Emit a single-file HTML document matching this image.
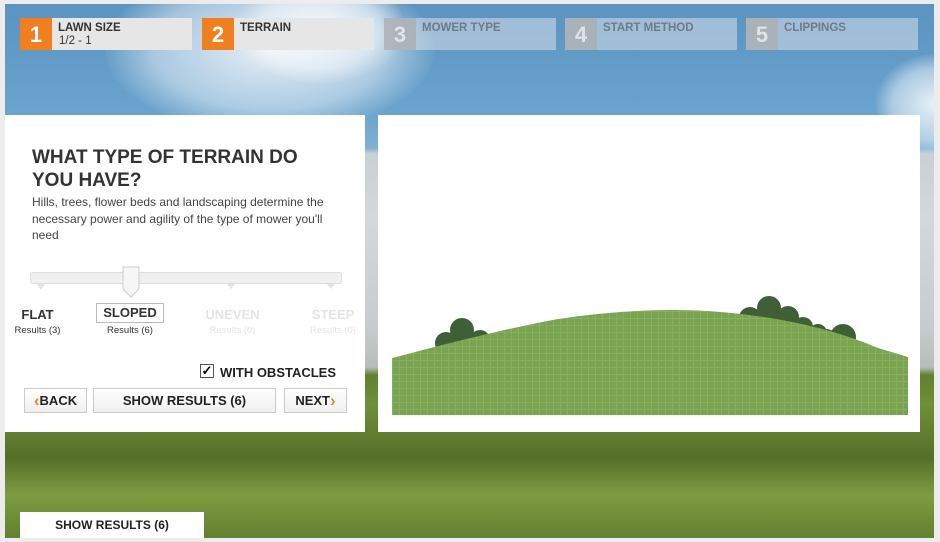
<!DOCTYPE html>
<html><head><style>
*{margin:0;padding:0;box-sizing:border-box}
body{width:940px;height:542px;background:#ececec;font-family:"Liberation Sans",Arial,sans-serif;position:relative;overflow:hidden}
#bg{position:absolute;left:5px;top:4px;width:929px;height:534px;overflow:hidden;
background:linear-gradient(180deg,#5b93c1 0%,#6aa3cd 20%,#7fb1d4 27%,#c9cfd4 28%,#d4d8db 40%,#c8cccf 60%,#b9bdb9 68%,#62802f 69.5%,#6f8f38 75%,#566f28 85%,#7d9c42 92%,#62802f 100%)}
.cloud{position:absolute;border-radius:50%;background:radial-gradient(ellipse at center,rgba(255,255,255,.85),rgba(255,255,255,.45) 50%,rgba(255,255,255,0) 72%)}
.step{position:absolute;top:18px;height:32px;width:172px;background:#e6e6e6}
.step .n{position:absolute;left:0;top:0;width:32px;height:32px;background:#f0801f;color:#fff;font-weight:bold;font-size:22px;text-align:center;line-height:34px}
.step .t{position:absolute;left:38px;top:5px;font-size:11.5px;font-weight:bold;color:#333;line-height:11px}
.step .s{font-weight:normal;display:block;margin-top:2px;margin-left:1px}
.step.off{background:rgba(225,230,235,.5)}
.step.off .n{background:rgba(170,175,180,.85);color:#e0e4e8}
.step.off .t{color:#6f7a85}
#left{position:absolute;left:5px;top:115px;width:360px;height:317px;background:#fff}
#right{position:absolute;left:378px;top:115px;width:542px;height:317px;background:#fff}
h1{position:absolute;left:27px;top:31px;font-size:19px;line-height:23px;color:#333;font-weight:bold;width:320px;white-space:nowrap}
.desc{position:absolute;left:27px;top:79px;font-size:12px;line-height:16.5px;color:#444;width:310px}
.track{position:absolute;left:25px;top:157px;width:312px;height:12px;background:#f0f0f0;border:1px solid #ddd;border-radius:3px}
.lbl{position:absolute;top:191px;font-size:13px;font-weight:bold;text-align:center;color:#333}
.res{position:absolute;top:210px;font-size:9.5px;text-align:center;color:#333}
.btn{position:absolute;top:273px;height:25px;border:1px solid #ccc;background:linear-gradient(#fff,#efefef);font-size:13px;font-weight:bold;color:#222;text-align:center;line-height:23px}
.or{color:#f0801f;font-size:17px;vertical-align:top}
</style></head><body>
<div id="bg">
<div class="cloud" style="left:100px;top:-40px;width:330px;height:170px"></div>
<div class="cloud" style="left:230px;top:-30px;width:170px;height:110px"></div>
<div class="cloud" style="left:870px;top:50px;width:120px;height:100px"></div>
</div>
<div class="step" style="left:20px"><div class="n">1</div><div class="t">LAWN SIZE<span class="s">1/2 - 1</span></div></div>
<div class="step" style="left:202px"><div class="n">2</div><div class="t">TERRAIN</div></div>
<div class="step off" style="left:384px"><div class="n">3</div><div class="t">MOWER TYPE</div></div>
<div class="step off" style="left:565px"><div class="n">4</div><div class="t">START METHOD</div></div>
<div class="step off" style="left:746px"><div class="n">5</div><div class="t">CLIPPINGS</div></div>

<div id="left">
<h1>WHAT TYPE OF TERRAIN DO<br>YOU HAVE?</h1>
<div class="desc">Hills, trees, flower beds and landscaping determine the necessary power and agility of the type of mower you'll<br>need</div>
<div class="track"></div>
<svg style="position:absolute;left:25px;top:150px" width="320" height="35">
<path d="M7 19 l4 6 l4 -6z M197 19 l4 5 l4 -5z M297 19 l4 5 l4 -5z" fill="#e4e4e4"/>
<path d="M93 2 h16 v22 l-8 8 l-8 -8z" fill="#f6f6f6" stroke="#ccc"/>
</svg>
<div class="lbl" style="left:10px;width:45px;top:192px">FLAT</div>
<div class="res" style="left:5px;width:55px">Results (3)</div>
<div class="lbl" style="left:91px;width:68px;top:188px;border:1px solid #bbb;height:20px;line-height:18px">SLOPED</div>
<div class="res" style="left:95px;width:60px">Results (6)</div>
<div class="lbl" style="left:195px;width:65px;color:#e4e4e4;top:192px">UNEVEN</div>
<div class="res" style="left:195px;width:65px;color:#e4e4e4">Results (0)</div>
<div class="lbl" style="left:302px;width:52px;color:#e4e4e4;top:192px">STEEP</div>
<div class="res" style="left:302px;width:52px;color:#e4e4e4">Results (0)</div>
<div style="position:absolute;left:195px;top:249px;width:14px;height:14px;border:1px solid #555;font-size:13px;line-height:12px;text-align:center;font-weight:bold">✓</div>
<div style="position:absolute;left:215px;top:250px;font-size:13px;font-weight:bold;color:#222">WITH OBSTACLES</div>
<div class="btn" style="left:19px;width:63px"><span class="or">‹</span>BACK</div>
<div class="btn" style="left:88px;width:183px">SHOW RESULTS (6)</div>
<div class="btn" style="left:279px;width:63px">NEXT<span class="or">›</span></div>
</div>

<div id="right">
<svg width="542" height="317" style="position:absolute;left:0;top:0">
<defs><pattern id="g" width="7" height="7" patternUnits="userSpaceOnUse"><rect width="7" height="7" fill="#7ba452"/><path d="M0 .5H7M.5 0V7" stroke="#88af5e" stroke-width="1"/></pattern></defs>
<g fill="#3f5f36">
<circle cx="84" cy="215" r="12"/><circle cx="68" cy="228" r="11"/><circle cx="102" cy="225" r="10"/><circle cx="80" cy="230" r="10"/>
<circle cx="391" cy="193" r="12"/><circle cx="372" cy="203" r="11"/><circle cx="410" cy="202" r="11"/><circle cx="395" cy="210" r="14"/><circle cx="440" cy="218" r="9"/><circle cx="465" cy="222" r="13"/><circle cx="448" cy="226" r="12"/><circle cx="425" cy="212" r="10"/>
</g>
<path d="M14 243 L26 240 Q120 215 180 204 Q260 192 330 196 Q430 203 500 233 L530 242 V300 H14Z" fill="url(#g)"/>
</svg>
</div>

<div style="position:absolute;left:20px;top:512px;width:184px;height:26px;background:#fff;font-size:12px;font-weight:bold;text-align:center;line-height:26px;color:#222">SHOW RESULTS (6)</div>
</body></html>
